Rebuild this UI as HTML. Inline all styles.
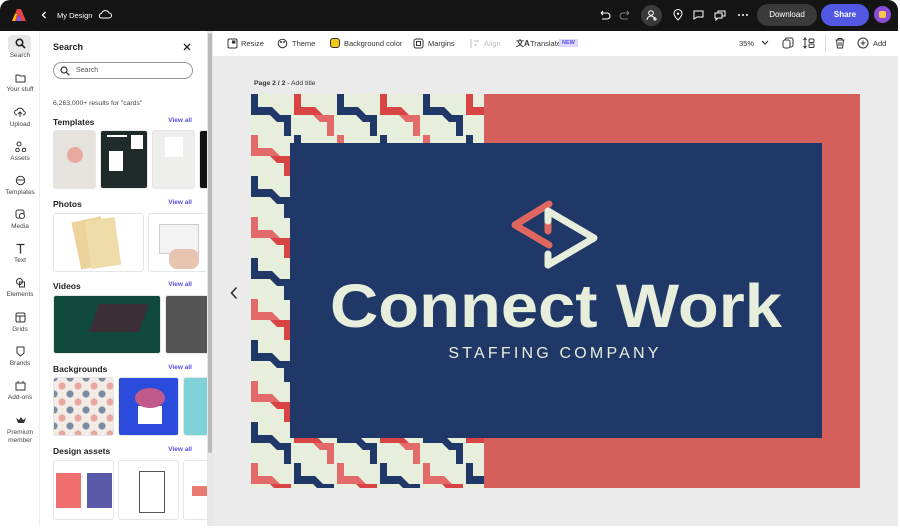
<!DOCTYPE html>
<html><head><meta charset="utf-8"><style>
*{box-sizing:border-box;margin:0;padding:0}
body{width:900px;height:528px;background:#fff;font-family:"Liberation Sans",sans-serif;position:relative;overflow:hidden;color:#222}
.top{position:absolute;left:0;top:0;width:898px;height:31px;background:#141414;border-radius:10px 10px 0 0;color:#fff}
.rail{position:absolute;left:0;top:31px;width:40px;height:495px;background:#fff;border-right:1px solid #eee}
.ri{position:absolute;left:0;width:40px;text-align:center;font-size:6.5px;color:#444}
.ri svg{display:block;margin:0 auto 3px}
.panel{position:absolute;left:40px;top:31px;width:168px;height:495px;background:#fff}
.sb{position:absolute;left:207px;top:31px;width:6px;height:495px;background:#e8e8e8}
.sb div{position:absolute;left:1px;top:2px;width:4px;height:420px;background:#bbb;border-radius:2px}
.main{position:absolute;left:213px;top:31px;width:685px;height:495px;background:#ebebeb}
.tb{position:absolute;left:213px;top:31px;width:685px;height:25px;background:#fff;font-size:7.5px;color:#333}
.tb span{position:absolute;top:8px}
.h{font-weight:bold;font-size:8.5px;position:absolute;left:13px}
.va{position:absolute;right:16px;font-size:6.5px;color:#5a4de0;font-weight:bold}
.th{position:absolute;border-radius:3px;border:1px solid #e6e6e6;overflow:hidden}
</style></head><body>
<div class="top">
 <svg style="position:absolute;left:12px;top:8px" width="14" height="14" viewBox="0 0 14 14"><path d="M5 1h4l5 12H9.5L7 6 4.5 13H0z" fill="#e8453c"/><path d="M7 6l2.5 7H4.5z" fill="#7b5cff"/><path d="M0 13l3-7 2 0-2 7z" fill="#ffb800"/></svg>
 <svg style="position:absolute;left:41px;top:11px" width="6" height="8"><path d="M4.5 1L1.5 4l3 3" stroke="#fff" fill="none" stroke-width="1.3"/></svg>
 <span style="position:absolute;left:57px;top:11px;font-size:7.5px">My Design</span>
 <svg style="position:absolute;left:98px;top:9px" width="14" height="10"><path d="M3 9h8a2.5 2.5 0 0 0 0-5A4 4 0 0 0 3.5 4.5 2.3 2.3 0 0 0 3 9z" stroke="#fff" fill="none" stroke-width="1"/></svg>
 <svg style="position:absolute;left:598px;top:9px" width="34" height="12"><path d="M3 4h6a3 3 0 0 1 0 6H4M3 4l2-2M3 4l2 2" stroke="#fff" fill="none" stroke-width="1.1"/><path d="M31 4h-6a3 3 0 0 0 0 6h5M31 4l-2-2M31 4l-2 2" stroke="#777" fill="none" stroke-width="1.1"/></svg>
 <div style="position:absolute;left:641px;top:5px;width:21px;height:21px;border-radius:50%;background:#3a3a3a"></div>
 <svg style="position:absolute;left:645px;top:9px" width="13" height="13"><circle cx="6" cy="4" r="2.3" stroke="#fff" fill="none"/><path d="M2 11a4 4 0 0 1 8 0M10 8v4M8 10h4" stroke="#fff" fill="none"/></svg>
 <svg style="position:absolute;left:672px;top:9px" width="80" height="12"><path d="M6 11s-4-4-4-6.5a4 4 0 0 1 8 0C10 7 6 11 6 11z" stroke="#fff" fill="none"/><circle cx="6" cy="4.7" r="1.2" fill="#fff"/><path d="M22 2h9v6h-6l-3 2z" stroke="#fff" fill="none"/><path d="M43 4h7v5h-4l-2 2v-2h-1zM46 4V2h7v5h-3" stroke="#fff" fill="none"/><circle cx="67" cy="6" r="1" fill="#fff"/><circle cx="71" cy="6" r="1" fill="#fff"/><circle cx="75" cy="6" r="1" fill="#fff"/></svg>
 <div style="position:absolute;left:757px;top:4px;width:60px;height:22px;border-radius:11px;background:#3a3a3a;font-size:8px;text-align:center;line-height:22px">Download</div>
 <div style="position:absolute;left:821px;top:4px;width:48px;height:22px;border-radius:11px;background:#5258e4;font-size:8px;font-weight:bold;text-align:center;line-height:22px">Share</div>
 <div style="position:absolute;left:874px;top:6px;width:17px;height:17px;border-radius:50%;background:#8a4bd8"><div style="margin:5px auto;width:7px;height:7px;background:#f5c84a;border-radius:2px"></div></div>
</div>

<div class="rail">
 <div style="position:absolute;left:8px;top:4px;width:23px;height:18px;background:#e8e8e8;border-radius:4px"></div>
 <div class="ri" style="top:7px"><svg width="11" height="11"><circle cx="4.5" cy="4.5" r="3.2" stroke="#222" stroke-width="1.6" fill="none"/><path d="M7 7l3 3" stroke="#222" stroke-width="1.6"/></svg>Search</div>
 <div class="ri" style="top:42px"><svg width="11" height="10"><path d="M1 2h3l1 1h5v6H1z" stroke="#333" fill="none"/></svg>Your stuff</div>
 <div class="ri" style="top:76px"><svg width="12" height="11"><path d="M3 8a2.5 2.5 0 0 1 0-5 3.5 3.5 0 0 1 6.5 1A2 2 0 0 1 9 8M6 10V5M4 7l2-2 2 2" stroke="#333" fill="none"/></svg>Upload</div>
 <div class="ri" style="top:110px"><svg width="11" height="11"><circle cx="4" cy="3" r="2" stroke="#333" fill="none"/><circle cx="2.5" cy="9" r="1.8" stroke="#333" fill="none"/><circle cx="9" cy="9" r="1.8" stroke="#333" fill="none"/></svg>Assets</div>
 <div class="ri" style="top:144px"><svg width="11" height="11"><circle cx="5.5" cy="5.5" r="4.2" stroke="#333" fill="none"/><path d="M2 5h7" stroke="#333"/></svg>Templates</div>
 <div class="ri" style="top:178px"><svg width="11" height="11"><rect x="1" y="1" width="8" height="8" rx="2" stroke="#333" fill="none"/><circle cx="7" cy="7" r="2.5" stroke="#333" fill="#fff"/></svg>Media</div>
 <div class="ri" style="top:212px"><svg width="11" height="11"><path d="M1.5 1.5h8M5.5 1.5v9" stroke="#333" stroke-width="1.3"/></svg>Text</div>
 <div class="ri" style="top:246px"><svg width="11" height="11"><circle cx="4.5" cy="4.5" r="3" stroke="#333" fill="none"/><rect x="4.5" y="5" width="5" height="5" stroke="#333" fill="none"/></svg>Elements</div>
 <div class="ri" style="top:281px"><svg width="11" height="11"><rect x="1" y="1" width="9" height="9" rx="1.5" stroke="#333" fill="none"/><path d="M1 4h9M5 4v6" stroke="#333"/></svg>Grids</div>
 <div class="ri" style="top:315px"><svg width="11" height="11"><path d="M2 1h7v6l-3.5 3L2 7z" stroke="#333" fill="none"/></svg>Brands</div>
 <div class="ri" style="top:349px"><svg width="11" height="11"><rect x="1" y="3" width="9" height="7" stroke="#333" fill="none"/><path d="M3 3V1M8 3V1" stroke="#333"/></svg>Add-ons</div>
 <div class="ri" style="top:384px;line-height:8px"><svg width="11" height="11"><path d="M1 3l2 5h6l2-5-3 2-2-3-2 3z" fill="#333"/></svg>Premium<br>member</div>
</div>

<div class="panel">
 <div class="h" style="top:11px;font-size:9px">Search</div>
 <svg style="position:absolute;left:143px;top:12px" width="8" height="8"><path d="M1 1l6 6M7 1l-6 6" stroke="#222" stroke-width="1.3"/></svg>
 <div style="position:absolute;left:13px;top:31px;width:140px;height:17px;border:1px solid #999;border-radius:9px;font-size:7px;color:#555;padding:4px 0 0 22px">Search</div>
 <svg style="position:absolute;left:20px;top:35px" width="10" height="10"><circle cx="4" cy="4" r="3" stroke="#333" fill="none" stroke-width="1.2"/><path d="M6.3 6.3l3 3" stroke="#333" stroke-width="1.2"/></svg>
 <div style="position:absolute;left:13px;top:69px;font-size:6.8px;color:#444">6,263,000+ results for "cards"</div>
 <div class="h" style="top:86px">Templates</div><div class="va" style="top:86px">View all</div>
 <div class="th" style="left:13px;top:99px;width:43px;height:59px;background:#e6e3df"><div style="margin:16px auto;width:16px;height:16px;border-radius:50%;background:#e8aaa0"></div></div>
 <div class="th" style="left:60px;top:99px;width:48px;height:59px;background:#1f2b2b"><div style="position:absolute;left:8px;top:20px;width:14px;height:20px;background:#fff"></div><div style="position:absolute;left:30px;top:4px;width:12px;height:14px;background:#fff"></div><div style="position:absolute;left:6px;top:4px;width:20px;height:2px;background:#fff"></div></div>
 <div class="th" style="left:112px;top:99px;width:43px;height:59px;background:#eeeeec"><div style="margin:6px auto;width:18px;height:20px;background:#fff"></div></div>
 <div class="th" style="left:159px;top:99px;width:12px;height:59px;background:#111"></div>
 <div class="h" style="top:168px">Photos</div><div class="va" style="top:168px">View all</div>
 <div class="th" style="left:13px;top:182px;width:91px;height:59px;background:#fff"><div style="position:absolute;left:22px;top:5px;width:30px;height:48px;background:#ecd39b;transform:rotate(-12deg)"></div><div style="position:absolute;left:34px;top:5px;width:30px;height:48px;background:#f0dca8;transform:rotate(-8deg)"></div></div>
 <div class="th" style="left:108px;top:182px;width:60px;height:59px;background:#fff"><div style="position:absolute;left:10px;top:10px;width:40px;height:30px;background:#f3f3f3;border:1px solid #ccc"></div><div style="position:absolute;left:20px;top:35px;width:30px;height:20px;background:#e8c5b0;border-radius:8px"></div></div>
 <div class="h" style="top:250px">Videos</div><div class="va" style="top:250px">View all</div>
 <div class="th" style="left:13px;top:264px;width:108px;height:59px;background:#0f4a3c"><div style="position:absolute;left:40px;top:8px;width:50px;height:28px;background:#3b2f35;transform:skew(-20deg)"></div></div>
 <div class="th" style="left:125px;top:264px;width:45px;height:59px;background:#555"></div>
 <div class="h" style="top:333px">Backgrounds</div><div class="va" style="top:333px">View all</div>
 <div class="th" style="left:13px;top:346px;width:61px;height:59px;background:#f2ebe6;background-image:radial-gradient(#e9a8a0 3px,transparent 4px),radial-gradient(#7a8ca0 3px,transparent 4px);background-size:16px 16px;background-position:0 0,8px 8px"></div>
 <div class="th" style="left:78px;top:346px;width:61px;height:59px;background:#2b4bdc"><div style="position:absolute;left:19px;top:28px;width:24px;height:18px;background:#fff"></div><div style="position:absolute;left:16px;top:10px;width:30px;height:20px;border-radius:50%;background:#c05a8a"></div></div>
 <div class="th" style="left:143px;top:346px;width:28px;height:59px;background:#7fd2d8"></div>
 <div class="h" style="top:415px">Design assets</div><div class="va" style="top:415px">View all</div>
 <div class="th" style="left:13px;top:429px;width:61px;height:60px;background:#fff"><div style="position:absolute;left:2px;top:12px;width:25px;height:35px;background:#ef6f6f"></div><div style="position:absolute;left:33px;top:12px;width:25px;height:35px;background:#5a5aa8"></div></div>
 <div class="th" style="left:78px;top:429px;width:61px;height:60px;background:#fff"><div style="position:absolute;left:20px;top:10px;width:26px;height:42px;border:1px solid #555;background:#fff"></div></div>
 <div class="th" style="left:143px;top:429px;width:28px;height:60px;background:#fff"><div style="position:absolute;left:8px;top:25px;width:16px;height:10px;background:#e87b70"></div></div>
</div>
<div class="sb"><div></div></div>

<div class="main"></div>
<div class="tb">
 <svg style="position:absolute;left:14px;top:7px" width="11" height="11"><rect x="1" y="1" width="9" height="9" rx="1.5" stroke="#333" fill="none"/><rect x="5" y="2.5" width="3.5" height="3" fill="#333"/></svg><span style="left:28px">Resize</span>
 <svg style="position:absolute;left:64px;top:7px" width="11" height="11"><circle cx="5.5" cy="5.5" r="4.3" stroke="#333" fill="none"/><circle cx="4" cy="4" r="1" fill="#333"/><circle cx="7" cy="4" r="1" fill="#333"/></svg><span style="left:79px">Theme</span>
 <div style="position:absolute;left:117px;top:7px;width:10px;height:10px;border-radius:3px;background:#f5c518;border:1px solid #333"></div><span style="left:131px">Background color</span>
 <svg style="position:absolute;left:200px;top:7px" width="11" height="11"><rect x="1" y="1" width="9" height="9" rx="2" stroke="#333" fill="none"/><rect x="3.5" y="3.5" width="4" height="4" stroke="#333" fill="none"/></svg><span style="left:215px">Margins</span>
 <svg style="position:absolute;left:257px;top:7px" width="11" height="11"><path d="M1 1v9M4 3h5M4 7h3" stroke="#bbb"/></svg><span style="left:271px;color:#bbb">Align</span>
 <span style="left:303px;font-weight:bold;font-size:8px;top:7px">文A</span><span style="left:317px">Translate</span>
 <span style="left:346px;background:#dcd8ff;color:#5a4de0;font-size:5.5px;padding:1px 3px;font-weight:bold;top:8px">NEW</span>
 <span style="left:526px">35%</span>
 <svg style="position:absolute;left:548px;top:9px" width="8" height="6"><path d="M1 1l3 3 3-3" stroke="#333" fill="none" stroke-width="1.2"/></svg>
 <svg style="position:absolute;left:569px;top:6px" width="12" height="12"><rect x="3" y="1" width="8" height="9" rx="2" stroke="#333" fill="none"/><rect x="1" y="3" width="7" height="8" rx="2" stroke="#333" fill="#fff"/></svg>
 <svg style="position:absolute;left:590px;top:6px" width="12" height="12"><path d="M2 1v10M0.5 3L2 1l1.5 2M0.5 9L2 11l1.5-2" stroke="#333" fill="none"/><rect x="6" y="2" width="5" height="3.5" rx="1" stroke="#333" fill="none"/><rect x="6" y="7" width="5" height="3.5" rx="1" stroke="#333" fill="none"/></svg>
 <div style="position:absolute;left:612px;top:4px;width:1px;height:17px;background:#ddd"></div>
 <svg style="position:absolute;left:621px;top:6px" width="12" height="12"><path d="M1.5 3h9M4 3V1.5h4V3M2.5 3l1 8h5l1-8M5 5v4M7 5v4" stroke="#333" fill="none"/></svg>
 <svg style="position:absolute;left:644px;top:6px" width="12" height="12"><circle cx="6" cy="6" r="5" stroke="#333" fill="none"/><path d="M6 3.5v5M3.5 6h5" stroke="#333"/></svg><span style="left:660px">Add</span>
</div>
<div style="position:absolute;left:254px;top:80px;font-size:6.8px;color:#333"><b>Page 2 / 2</b> - Add title</div>
<svg style="position:absolute;left:229px;top:286px" width="10" height="14"><path d="M7.5 1.5L2.5 7l5 5.5" stroke="#333" fill="none" stroke-width="1.6"/></svg>

<svg style="position:absolute;left:251px;top:94px" width="609" height="394" viewBox="0 0 609 394">
 <defs>
  <pattern id="p" width="86" height="82" patternUnits="userSpaceOnUse">
   <rect width="86" height="82" fill="#e8eedc"/>
   <path d="M0 0h7v13h14l8 8H0z" fill="#1f3868"/>
   <path d="M19 21h21v21h-7V28h-7z" fill="#1f3868"/>
   <g transform="translate(43,0)"><path d="M0 0h7v13h14l8 8H0z" fill="#d84343"/><path d="M19 21h21v21h-7V28h-7z" fill="#e26a68"/></g>
   <g transform="translate(0,41)"><path d="M0 0h7v13h14l8 8H0z" fill="#e26a68"/><path d="M19 21h21v21h-7V28h-7z" fill="#d84343"/></g>
   <g transform="translate(43,41)"><path d="M0 0h7v13h14l8 8H0z" fill="#1f3868"/><path d="M19 21h21v21h-7V28h-7z" fill="#1f3868"/></g>
  </pattern>
 </defs>
 <rect width="609" height="394" fill="#d45f5b"/>
 <rect width="233" height="394" fill="url(#p)"/>
 <rect x="39" y="49" width="532" height="295" fill="#1f3868"/>
 <path d="M298 110L264 131l34 20" stroke="#e06660" stroke-width="7" fill="none" stroke-linejoin="round" stroke-linecap="round"/>
 <path d="M297 127v10" stroke="#e06660" stroke-width="7" stroke-linecap="round"/>
 <path d="M297 171l46-27-46-27v10" stroke="#e8eedc" stroke-width="7" fill="none" stroke-linejoin="round" stroke-linecap="round"/>
 <path d="M297 160v11" stroke="#e8eedc" stroke-width="7" stroke-linecap="round"/>
 <text x="79" y="233" textLength="452" lengthAdjust="spacingAndGlyphs" font-family="'Liberation Sans',sans-serif" font-weight="bold" font-size="61" fill="#e8eedc">Connect Work</text>
 <text x="304" y="264" text-anchor="middle" font-family="'Liberation Sans',sans-serif" font-size="16" letter-spacing="3.2" fill="#e8eedc">STAFFING COMPANY</text>
</svg>
</body></html>
